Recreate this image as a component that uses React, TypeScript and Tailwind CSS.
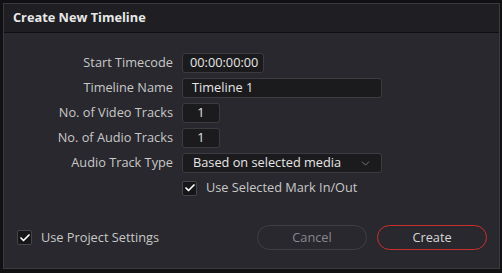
import { Check, ChevronDown } from 'lucide-react'

const font = { fontFamily: '"Open Sans", "Noto Sans", sans-serif' }

function Row({ label, children }: { label: string; children: React.ReactNode }) {
  return (
    <div className="flex h-5 items-center">
      <span className="w-[178px] pr-[9px] text-right text-[12.75px] text-[#c8c8c8]">{label}</span>
      {children}
    </div>
  )
}

function Box({ className, children }: { className: string; children: React.ReactNode }) {
  return (
    <div
      className={`flex h-5 items-center rounded-[3px] border border-[#3c3c40] bg-[#1b1b1e] text-[12.75px] text-[#e6e6e6] ${className}`}
    >
      {children}
    </div>
  )
}

function CheckBox() {
  return (
    <div className="flex h-[15px] w-[15px] items-center justify-center rounded-[2px] border border-[#45454a] bg-[#161618]">
      <Check className="h-3 w-3 text-white" strokeWidth={3.5} />
    </div>
  )
}

export default function App() {
  return (
    <div className="h-[273px] w-[502px] bg-[#111113] p-[3px] pr-[2px] pb-[4px]" style={font}>
      <div className="flex h-full flex-col border border-[#3a3a3e] bg-[#28282e]">
        {/* Header */}
        <div className="flex h-[29px] items-center border-b border-[#0f0f11] bg-[#1f1f23] px-[9px]">
          <span className="text-[12.75px] font-bold text-[#e8e8e8]">Create New Timeline</span>
        </div>

        {/* Form */}
        <div className="flex flex-col gap-[5px] pt-[20px]">
          <Row label="Start Timecode">
            <Box className="w-[82px] pl-[7px]">00:00:00:00</Box>
          </Row>
          <Row label="Timeline Name">
            <Box className="w-[200px] pl-[9px]">Timeline 1</Box>
          </Row>
          <Row label="No. of Video Tracks">
            <Box className="w-[38px] justify-center">1</Box>
          </Row>
          <Row label="No. of Audio Tracks">
            <Box className="w-[38px] justify-center">1</Box>
          </Row>
          <Row label="Audio Track Type">
            <Box className="w-[200px] justify-between pl-[10px] pr-[9px]">
              <span>Based on selected media</span>
              <ChevronDown className="h-[13px] w-[13px] text-[#8a8a90]" strokeWidth={1.5} />
            </Box>
          </Row>
          <div className="flex h-5 items-center pl-[178px]">
            <CheckBox />
            <span className="pl-[9px] text-[12.75px] text-[#c8c8c8]">Use Selected Mark In/Out</span>
          </div>
        </div>

        {/* Footer */}
        <div className="mt-auto flex items-center justify-between pb-[18px] pl-[13px] pr-[12px]">
          <div className="flex items-center">
            <CheckBox />
            <span className="pl-[9px] text-[12.75px] text-[#c8c8c8]">Use Project Settings</span>
          </div>
          <div className="flex gap-[10px]">
            <button className="h-[25px] w-[110px] rounded-full border border-[#3e3e44] text-[12.75px] text-[#88888e]">
              Cancel
            </button>
            <button className="h-[25px] w-[110px] rounded-full border border-[#c8322c] text-[12.75px] text-[#d8d8d8]">
              Create
            </button>
          </div>
        </div>
      </div>
    </div>
  )
}
